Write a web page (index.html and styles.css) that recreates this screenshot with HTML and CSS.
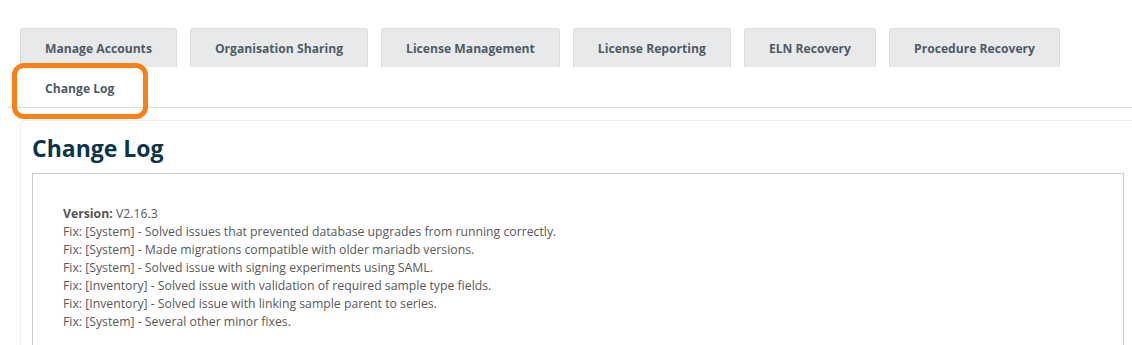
FILE: index.html
```html
<!DOCTYPE html>
<html lang="en">
<head>
  <meta charset="UTF-8">
  <title>Change Log</title>
  <link rel="stylesheet" href="styles.css">
</head>
<body>
  <!-- Admin tabs -->
  <nav class="tabs">
    <a class="tab">Manage Accounts</a>
    <a class="tab">Organisation Sharing</a>
    <a class="tab">License Management</a>
    <a class="tab">License Reporting</a>
    <a class="tab">ELN Recovery</a>
    <a class="tab">Procedure Recovery</a>
    <a class="tab active">Change Log<span class="highlight"></span></a>
  </nav>

  <!-- Change log panel -->
  <section class="panel">
    <h2>Change Log</h2>
    <div class="log-box">
      <p class="entry">
        <strong>Version:</strong> V2.16.3<br>
        Fix: [System] - Solved issues that prevented database upgrades from running correctly.<br>
        Fix: [System] - Made migrations compatible with older mariadb versions.<br>
        Fix: [System] - Solved issue with signing experiments using SAML.<br>
        Fix: [Inventory] - Solved issue with validation of required sample type fields.<br>
        Fix: [Inventory] - Solved issue with linking sample parent to series.<br>
        Fix: [System] - Several other minor fixes.
      </p>
    </div>
  </section>
</body>
</html>
```

FILE: styles.css
```css
/* General Styles */
body {
  font-family: "Open Sans", Arial, sans-serif;
  background-color: #ffffff;
  color: #555555;
  margin: 0;
  padding: 28px 0 0 8px;
  height: 345px;
  box-sizing: border-box;
  overflow: hidden;
}
/* Tabs */
.tabs {
  display: flex;
  flex-wrap: wrap;
  column-gap: 13px;
  row-gap: 1px;
  padding-left: 12px;
  border-bottom: 1px solid #dddddd;
}
.tab {
  position: relative;
  box-sizing: border-box;
  height: 39px;
  padding: 0 24px;
  display: flex;
  align-items: center;
  background: #e8e9eb;
  border: 1px solid #dcdddf;
  border-bottom: none;
  border-radius: 3px 3px 0 0;
  color: #4f5b66;
  font-size: 12.15px;
  font-weight: 700;
  cursor: pointer;
}
.tab.active {
  background: #ffffff;
  border-color: #ffffff;
}
/* orange annotation around the active tab */
.highlight {
  position: absolute;
  left: -9px;
  top: -6px;
  width: 136px;
  height: 56px;
  box-sizing: border-box;
  border: 5px solid #fa8118;
  border-radius: 12px;
}
/* Panel */
.panel {
  margin: 12px 0 0 12px;
  padding: 12px 0 0 11px;
  border: 1px solid #eeeeee;
  border-right: none;
  border-bottom: none;
  border-radius: 4px 0 0 0;
}
.panel h2 {
  margin: 0 0 10px 0;
  font-size: 23px;
  font-weight: 700;
  color: #0b3549;
  line-height: 30px;
}
.log-box {
  margin-right: 8px;
  height: 200px;
  border: 1px solid #cccccc;
  padding: 31px 30px;
}
.entry {
  margin: 0;
  font-size: 12.25px;
  line-height: 18px;
  color: #595959;
}
.entry strong {
  color: #555555;
}
```
